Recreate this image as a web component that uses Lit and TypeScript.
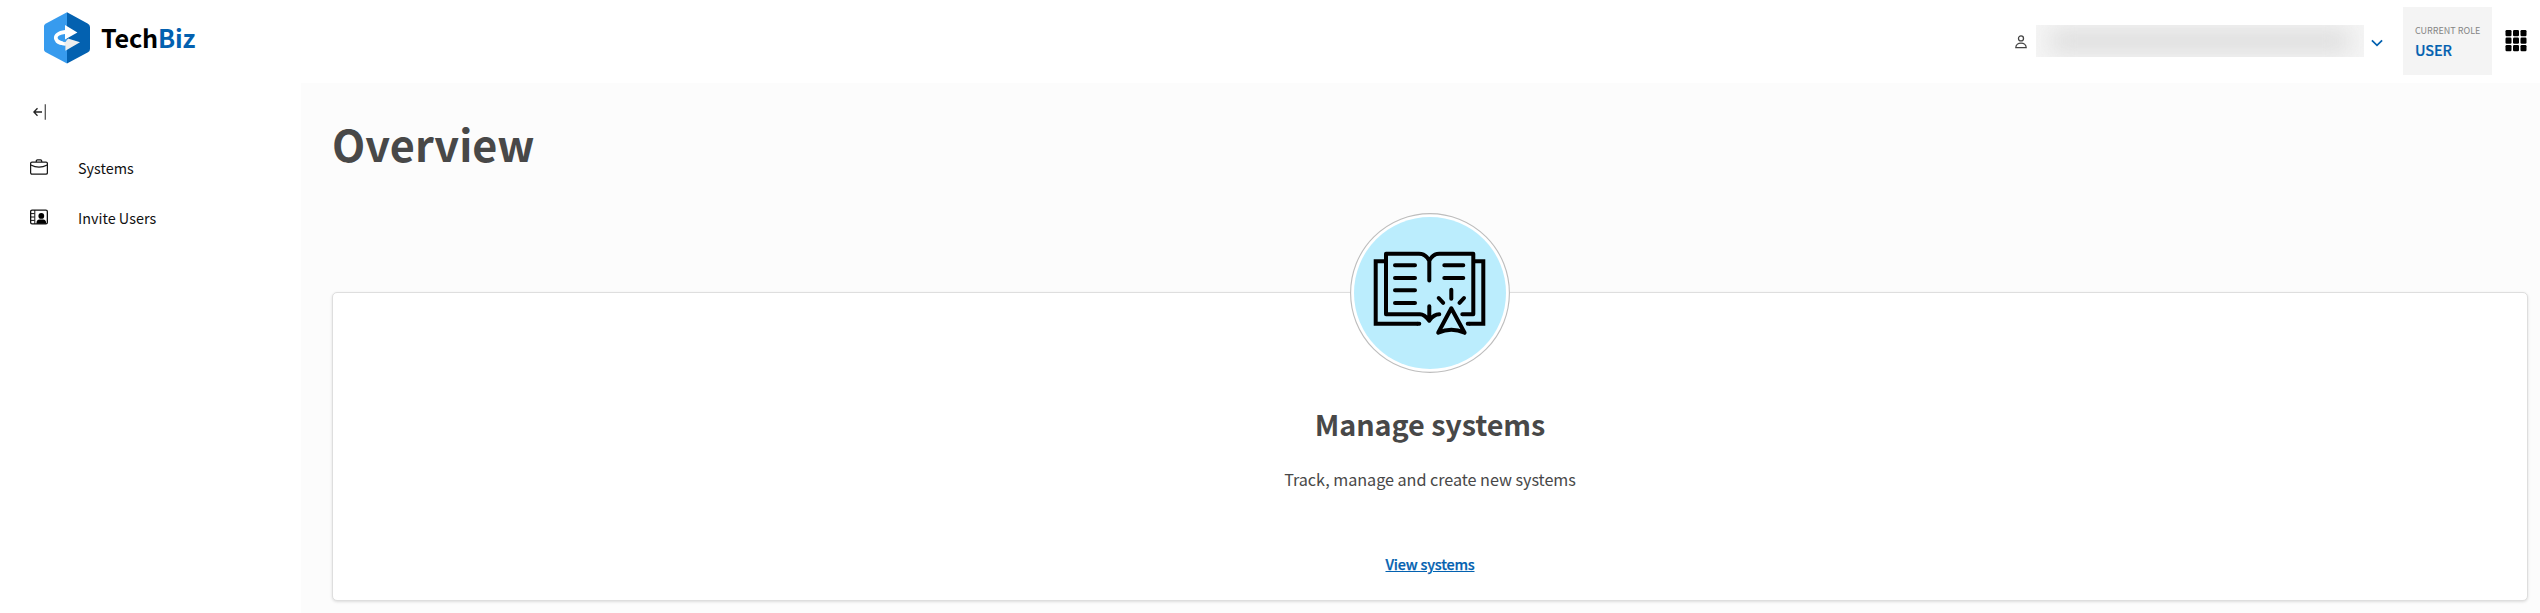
import { LitElement, html, css, svg } from "lit";
import { customElement, property } from "lit/decorators.js";

const systemsIcon = svg`<svg width="18" height="16" viewBox="0 0 18 16" fill="none" stroke="#181818" stroke-width="1.25">
  <rect x=".6" y="3" width="16.8" height="12.1" rx="1.4"/>
  <path d="M6.3 3V2Q6.300.9 7.400.9h3.200q1.100 0 1.100 1.100v1M.8 6Q9 10.400 17.200 6"/></svg>`;

const inviteIcon = svg`<svg width="18" height="16" viewBox="0 0 18 16" fill="none" stroke="#111" stroke-width="1.3">
  <rect x=".65" y="1.1" width="16.7" height="13.7" rx="1.4"/>
  <path d="M4.800 1v14M.6 4.600h4M.6 8h4M.6 11.400h4" stroke-width="1"/>
  <circle cx="11.3" cy="6.9" r="2.9" fill="#000" stroke="none"/>
  <path d="M6.400 14.800q0-4.200 3.200-4.200h3.400q3.200 0 3.200 4.200z" fill="#000" stroke="none"/></svg>`;

@customElement("side-link")
class SideLink extends LitElement {
  @property() label = "";
  @property({ attribute: false }) icon: unknown;
  static styles = css`
    :host { display: block; }
    .row { display: flex; align-items: center; height: 50px; padding-left: 30px; gap: 30px; }
    .label { font-size: 14.4px; line-height: 20px; white-space: nowrap; color: #111; }
    .icon { display: flex; padding-bottom: 3px; }
  `;
  render() {
    return html`<div class="row"><span class="icon">${this.icon}</span><span class="label">${this.label}</span></div>`;
  }
}

@customElement("app-root")
class AppRoot extends LitElement {
  static styles = css`
    :host { display: block; height: 613px; overflow: hidden; background: #fff; font-family: "Noto Sans CJK SC", "Noto Sans", sans-serif; color: #484848; }
    svg { display: block; flex: none; }
    header { height: 83px; display: flex; justify-content: space-between; box-sizing: border-box; }
    .brand { display: flex; padding: 12px 0 0 43px; gap: 10px; }
    .name { font-size: 25.2px; font-weight: 700; line-height: 36px; padding-top: 7px; color: #000; white-space: nowrap; letter-spacing: -.15px; }
    .name span { color: #0361b0; }
    .tools { display: flex; align-items: center; height: 82px; padding-right: 13px; }
    .user { margin-right: 9px; padding-top: 1px; }
    .redacted { width: 328px; height: 32px; flex: none; background: #f5f5f5; overflow: hidden; display: flex; align-items: center; justify-content: center; }
    .smear { width: 298px; height: 22px; background: #dcdcdc; filter: blur(11px); }
    .chev { margin: 3px 20px 0 7px; }
    .role { width: 89px; height: 68px; flex: none; box-sizing: border-box; background: #f4f4f4; padding: 16px 0 0 12px; }
    .cap { font-size: 9px; line-height: 16px; color: #858585; white-space: nowrap; }
    .who { font-size: 14.4px; line-height: 20px; font-weight: 500; color: #0361b0; padding-top: 1px; letter-spacing: -.1px; -webkit-text-stroke: .2px #0361b0; }
    .grid { margin-left: 13px; }
    .body { display: flex; height: 530px; }
    nav { width: 301px; flex: none; padding-top: 21px; box-sizing: border-box; }
    .collapse { height: 39px; padding-left: 33px; }
    main { flex: 1; background: #fcfcfc; padding: 30px 12px 0 31px; box-sizing: border-box; }
    h1 { margin: 0; font-size: 43.2px; line-height: 60px; font-weight: 700; height: 179px; white-space: nowrap; }
    .card { height: 309px; box-sizing: border-box; border: 1px solid #dedede; border-radius: 5px; background: #fff; box-shadow: 0 1px 3px rgba(0,0,0,.13); display: flex; flex-direction: column; align-items: center; white-space: nowrap; }
    .badge { margin-top: -80px; }
    h2 { margin: 27px 0 0; font-size: 28.8px; line-height: 48px; font-weight: 700; letter-spacing: -.1px; }
    .text { font-size: 16.2px; line-height: 24px; padding-top: 19px; letter-spacing: -.04px; }
    .view { font-size: 14.4px; line-height: 24px; font-weight: 500; color: #0361b0; margin-top: 61px; text-decoration: underline; letter-spacing: -.2px; -webkit-text-stroke: .25px #0361b0; }
  `;

  render() {
    const cells = [0, 1, 2];
    return html`
      <header>
        <div class="brand">
          <svg width="48" height="52" viewBox="0 0 48 52">
            <path d="M24 .3 3 11.400Q1 12.600 1 14v23.600q0 1.600 1.400 2.400L24 51.500z" fill="#379bee"/>
            <path d="m24 .3 20.600 11.100Q47 12.600 47 15v22q0 2.200-2 3.200L24 51.500z" fill="#0361b0"/>
            <path d="m25 26.600 12 3.700-14.600 8.500v-5.200Q14 33 12 29.500l10.500.5z" fill="#eee"/>
            <path d="M22 13 34.400 20.500 22 27.500v-5.500c-8 .8-10.500 5-2 7.600l2.500 4C7.500 32.500 7 19.500 22 18z" fill="#fff"/>
          </svg>
          <div class="name">Tech<span>Biz</span></div>
        </div>
        <div class="tools">
          <svg class="user" width="12" height="14" viewBox="0 0 12 14" fill="none" stroke="#444" stroke-width="1.3">
            <circle cx="6" cy="3.4" r="2.5"/><path d="M.8 12.700c0-6.200 10.400-6.200 10.400 0z"/></svg>
          <div class="redacted"><div class="smear"></div></div>
          <svg class="chev" width="12" height="8" viewBox="0 0 12 8" fill="none" stroke="#0361b0" stroke-width="1.7"><path d="m.9 1.300 5.100 5.100L11.100 1.300"/></svg>
          <div class="role"><div class="cap">CURRENT ROLE</div><div class="who">USER</div></div>
          <svg class="grid" width="22" height="22" viewBox="0 0 22 22">
            ${cells.map(r => cells.map(c => svg`<rect x=${0.5 + c * 7.5} y=${0 + r * 7.5} width="6" height="6.2" rx="1.2"/>`))}
          </svg>
        </div>
      </header>
      <div class="body">
        <nav>
          <div class="collapse">
            <svg width="14" height="16" viewBox="0 0 14 16" fill="none" stroke="#222" stroke-width="1.3"><path d="M9 8H1M4.500 4.300.9 8l3.600 3.700"/><path d="M12.300.3v15.400" stroke="#555"/></svg>
          </div>
          <side-link label="Systems" .icon=${systemsIcon}></side-link>
          <side-link label="Invite Users" .icon=${inviteIcon}></side-link>
        </nav>
        <main>
          <h1>Overview</h1>
          <section class="card">
            <svg class="badge" width="160" height="160" viewBox="0 0 160 160" fill="none" stroke-linecap="round" stroke-linejoin="round">
              <circle cx="80" cy="80" r="79.4" fill="#fff" stroke="#bdbdbd" stroke-width="1.1"/>
              <circle cx="80" cy="80" r="76" fill="#bbedfd"/>
              <g stroke="#000" stroke-width="4">
                <path stroke-linejoin="miter" stroke-linecap="butt" d="M37.700 48.300h-12v62.400H68M124.300 48.300h9v62.400H119"/>
                <path d="M68 110.700h1.300M119 110.700h-1.300"/>
                <path d="M79.300 67.500V47.700C77 43.300 74 40.700 69 40.700H36v60.600h34c4 0 6.500 2.700 9.300 6.400 2.600-3.700 5.200-6.400 10-6.400M79.300 47.700c2.200-4.400 5.200-7 10-7h34v60.600h-11M79.300 93.300v14.400"/>
                <path d="M45 52.300h20M45 65h20M45 77.300h20M45 90h20M94.300 52.300h19M94.300 65h19M101.300 76.800v9M88.700 85l4.500 4.900M114 85l-4.500 4.900"/>
                <path d="m101.300 95.300-13.100 24.500q13.100-6 26.400 0z" fill="#bbedfd"/>
              </g>
            </svg>
            <h2>Manage systems</h2>
            <div class="text">Track, manage and create new systems</div>
            <a class="view">View systems</a>
          </section>
        </main>
      </div>`;
  }
}
